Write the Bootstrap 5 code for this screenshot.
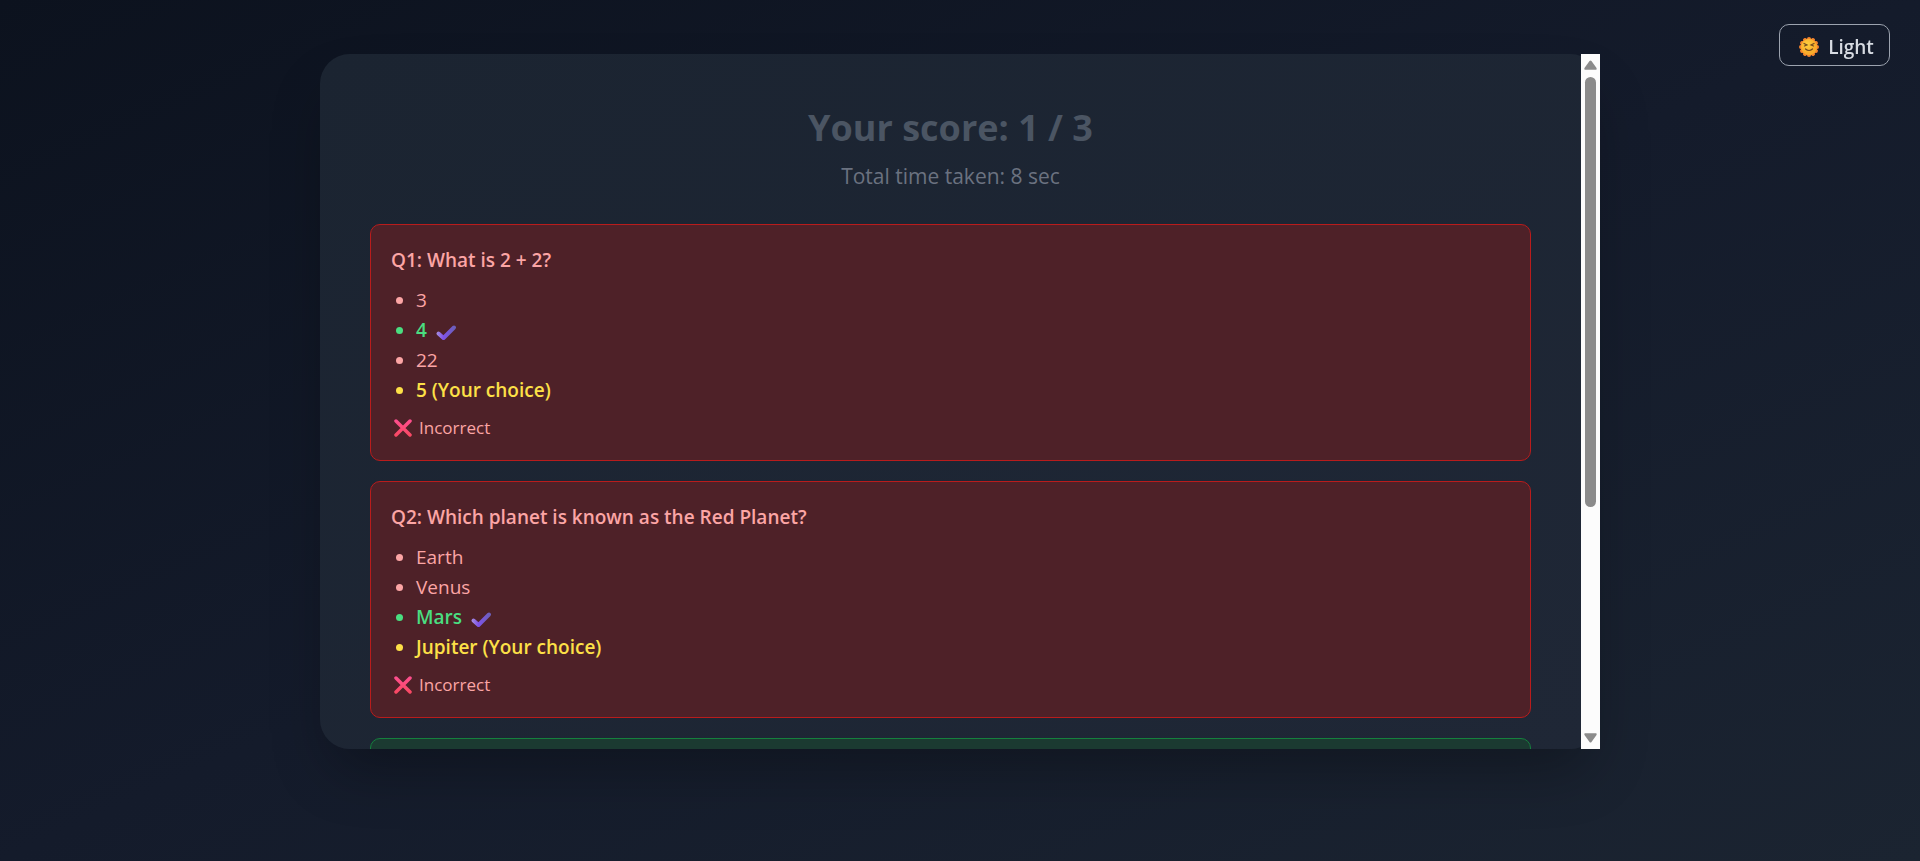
<!DOCTYPE html>
<html lang="en">
<head>
<meta charset="utf-8">
<meta name="viewport" content="width=device-width, initial-scale=1">
<title>Quiz results</title>
<link href="https://cdn.jsdelivr.net/npm/bootstrap@5.3.0/dist/css/bootstrap.min.css" rel="stylesheet">
<style>
  body {
    font-family: "Open Sans", "Segoe UI", sans-serif;
    font-size: 19px;
    line-height: 30px;
    color: #fca5a5;
    background: linear-gradient(to bottom right, #0c121e, #141b2b 50%, #1b2431) no-repeat #1b2431;
    padding: 54px 20px 0;
  }
  .theme-toggle {
    position: fixed;
    top: 24px;
    right: 30px;
    width: 111px;
    height: 42px;
    gap: 9px;
    font-size: 19px;
    font-weight: 600;
    color: #d7dbe2;
    background: transparent;
    border: 1px solid #9ca3af;
    border-radius: 10px;
  }
  .theme-toggle:hover { color: #fff; border-color: #fff; background: #1f2937; }
  .results-panel {
    max-width: 1280px;
    height: calc(100vh - 166px);
    background: linear-gradient(to bottom right, #1b2431, #1f2736);
    border-radius: 30px;
    box-shadow: 0 30px 60px -12px rgba(0, 0, 0, .3);
  }
  .results-scroll {
    min-width: 0;
    padding: 50px;
    overflow-y: auto;
    scrollbar-width: none;
    border-radius: 30px 0 0 30px;
  }
  .results-scroll::-webkit-scrollbar { display: none; }
  .scroll-rail { width: 19px; padding: 6px 4px; background: #fcfcfc; }
  .scroll-thumb { width: 11px; height: 63%; margin-top: 7px; background: #8b8b8b; border-radius: 6px; }
  .score { font-size: 36px; line-height: 48px; color: #4b5563; margin-bottom: 7px; }
  .total-time { font-size: 21px; line-height: 35px; color: #6b7280; margin-bottom: 30px; }
  .question-list { gap: 20px; }
  .question {
    padding: 20px;
    min-height: 237px;
    border: 1px solid #b91c1c;
    border-radius: 10px;
    background: #4e2128;
  }
  .question.is-correct { border-color: #15803d; background: #1b3a31; }
  .question-title { font-size: 19px; line-height: 30px; margin-bottom: 10px; }
  .options { padding-left: 25px; margin-bottom: 10px; }
  .right-answer { color: #4ade80; font-weight: 600; }
  .your-choice { color: #fde047; font-weight: 600; }
  .tick { margin-left: 3px; vertical-align: -5px; }
  .verdict { font-size: 17px; line-height: 25px; gap: 7px; padding-left: 3px; }
</style>
</head>
<body class="min-vh-100 d-flex justify-content-center align-items-start">
<svg class="position-absolute" width="0" height="0" aria-hidden="true">
  <defs>
    <linearGradient id="tick-fill" gradientUnits="userSpaceOnUse" x1="2" y1="6" x2="20" y2="6">
      <stop offset="0" stop-color="#a58be0"/><stop offset=".35" stop-color="#7f52e8"/><stop offset="1" stop-color="#6b5fb8"/>
    </linearGradient>
    <linearGradient id="cross-fill" gradientUnits="userSpaceOnUse" x1="0" y1="0" x2="0" y2="18">
      <stop offset="0" stop-color="#ff4f92"/><stop offset="1" stop-color="#f8485f"/>
    </linearGradient>
    <radialGradient id="sun-fill" cx=".4" cy=".35">
      <stop offset="0" stop-color="#ffd23f"/><stop offset="1" stop-color="#f9ac2b"/>
    </radialGradient>
  </defs>
</svg>

<button type="button" class="theme-toggle btn d-flex align-items-center justify-content-center p-0 ps-1 pt-1">
  <svg width="20" height="20" viewBox="0 0 20 20" aria-hidden="true">
    <g fill="#f5832c">
      <circle cx="10" cy="10" r="8.500"/>
      <g id="rays"><circle cx="10" cy="2" r="2"/><circle cx="10" cy="18" r="2"/><circle cx="2" cy="10" r="2"/><circle cx="18" cy="10" r="2"/></g>
      <use href="#rays" transform="rotate(30 10 10)"/>
      <use href="#rays" transform="rotate(60 10 10)"/>
    </g>
    <circle cx="10" cy="10" r="8" fill="url(#sun-fill)"/>
    <path d="M5 6.500 8 8 5.500 9M15 6.500 12 8l2.500 1M6.500 12q3.500 3 7 0" fill="none" stroke="#70491e" stroke-width="1.200" stroke-linecap="round"/>
  </svg>
  Light
</button>

<main class="results-panel d-flex w-100">
  <div class="results-scroll flex-fill" tabindex="0">
    <header class="text-center">
      <h1 class="score fw-bold">Your score: 1 / 3</h1>
      <p class="total-time">Total time taken: 8 sec</p>
    </header>
    <div class="question-list d-flex flex-column">
      <section class="question">
        <h2 class="question-title fw-semibold">Q1: What is 2 + 2?</h2>
        <ul class="options">
          <li>3</li>
          <li class="right-answer">4 <svg width="22" height="18" viewBox="0 0 22 18" role="img" aria-label="correct" class="tick"><path d="M3.500 9.500 8.500 14 19 3.500" fill="none" stroke="url(#tick-fill)" stroke-width="4" stroke-linecap="round" stroke-linejoin="round"/></svg></li>
          <li>22</li>
          <li class="your-choice">5 (Your choice)</li>
        </ul>
        <p class="verdict d-flex align-items-center mb-0"><svg width="18" height="18" viewBox="0 0 18 18" aria-hidden="true"><path d="M2 2 16 16M16 2 2 16" stroke="url(#cross-fill)" stroke-width="3.500" stroke-linecap="round"/></svg>Incorrect</p>
      </section>
      <section class="question">
        <h2 class="question-title fw-semibold">Q2: Which planet is known as the Red Planet?</h2>
        <ul class="options">
          <li>Earth</li>
          <li>Venus</li>
          <li class="right-answer">Mars <svg width="22" height="18" viewBox="0 0 22 18" role="img" aria-label="correct" class="tick"><path d="M3.500 9.500 8.500 14 19 3.500" fill="none" stroke="url(#tick-fill)" stroke-width="4" stroke-linecap="round" stroke-linejoin="round"/></svg></li>
          <li class="your-choice">Jupiter (Your choice)</li>
        </ul>
        <p class="verdict d-flex align-items-center mb-0"><svg width="18" height="18" viewBox="0 0 18 18" aria-hidden="true"><path d="M2 2 16 16M16 2 2 16" stroke="url(#cross-fill)" stroke-width="3.500" stroke-linecap="round"/></svg>Incorrect</p>
      </section>
      <section class="question is-correct"></section>
    </div>
  </div>
  <div class="scroll-rail d-flex flex-column align-items-center flex-shrink-0" aria-hidden="true">
    <svg class="flex-shrink-0" width="13" height="10" viewBox="0 0 13 10"><path d="M5.500 1Q6.500 -.2 7.500 1L12.500 8Q13 9.700 12 9.700H1Q0 9.700 .5 8Z" fill="#8b8b8b"/></svg>
    <div class="scroll-thumb flex-shrink-0 mb-auto"></div>
    <svg class="flex-shrink-0" width="13" height="10" viewBox="0 0 13 10"><path d="M5.500 9Q6.500 10.200 7.500 9L12.500 2Q13 .3 12 .3H1Q0 .3 .5 2Z" fill="#8b8b8b"/></svg>
  </div>
</main>
<script src="https://cdn.jsdelivr.net/npm/bootstrap@5.3.0/dist/js/bootstrap.bundle.min.js"></script>
</body>
</html>
